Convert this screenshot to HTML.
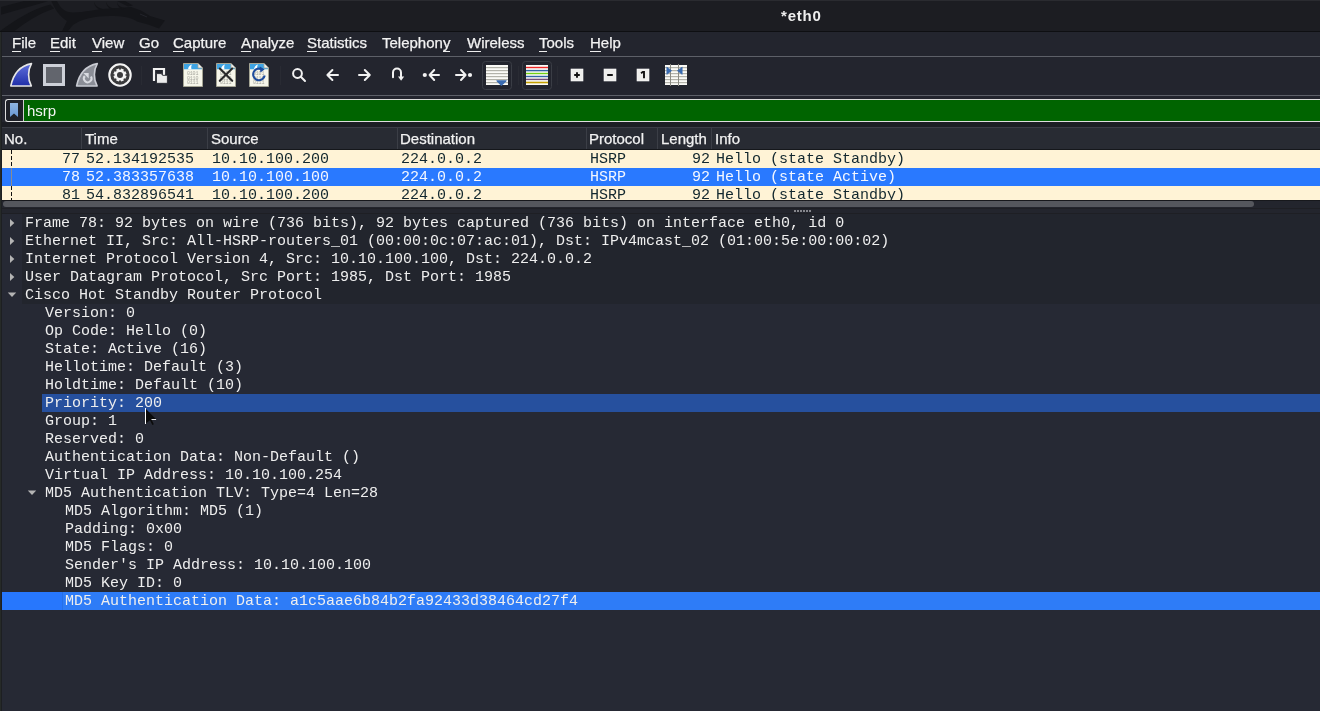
<!DOCTYPE html>
<html><head><meta charset="utf-8">
<style>
*{margin:0;padding:0;box-sizing:border-box}
html,body{will-change:transform;width:1320px;height:711px;overflow:hidden;background:#23252e;font-family:"Liberation Sans",sans-serif;position:relative}
.a{position:absolute}
#title{left:0;top:0;width:1320px;height:31px;background:#1c1d22}
#titlebot{left:0;top:31px;width:1320px;height:1px;background:#0e0f12}
#ttext{left:781px;top:0;height:31px;line-height:31px;font-weight:bold;font-size:15px;letter-spacing:0.8px;color:#eeeeee}
#menu{left:0;top:32px;width:1320px;height:24px;background:#23252e}
.mi{position:absolute;top:31px;height:24px;line-height:24px;font-size:15px;color:#f2f2f2;-webkit-text-stroke:0.25px #f2f2f2}
.mi u{text-decoration:none;border-bottom:1px solid #eeeeee}
.sep{position:absolute;left:2px;width:1318px;height:1px;background:#5d6068}
#tool{left:0;top:57px;width:1320px;height:38px;background:#23252e}
#filterwrap{left:5px;top:99px;width:1320px;height:23px;border:1px solid #dedede;border-right:none;border-radius:3px 0 0 3px;background:#1f2128}
#fgreen{left:24px;top:100px;width:1296px;height:21px;background:#006400}
#ftext{left:27px;top:100px;height:21px;line-height:21px;font-size:15px;color:#f4f4f4}
#hdrgap{left:2px;top:122px;width:1318px;height:5px;background:#1c1e24}
#hdr{left:2px;top:127px;width:1318px;height:22px;background:#282b33;border-top:1px solid #3b3e46}
.hc{position:absolute;top:128px;height:22px;line-height:22px;font-size:15px;color:#f2f2f2;-webkit-text-stroke:0.25px #f2f2f2}
.hs{position:absolute;top:128px;width:1px;height:21px;background:#3b3e46}
#hdrbot{left:2px;top:149px;width:1318px;height:1px;background:#15171b}
.row{position:absolute;left:2px;width:1318px;height:18px}
.cream{background:#fff3d6;color:#12272e}
.sel{background:#2979ff;color:#f4f7ff}
.pt{position:absolute;top:1px;height:18px;line-height:18px;font-family:"Liberation Mono",monospace;font-size:15px;white-space:pre}
#plclip{left:0;top:150px;width:1320px;height:50px;overflow:hidden}
#sbline{left:2px;top:200px;width:1318px;height:1px;background:#17181c}
#sbtrack{left:2px;top:201px;width:1318px;height:7px;background:#23252d}
#sbthumb{left:3px;top:201px;width:1251px;height:6px;border-radius:3px;background:#55575d}
#split{left:2px;top:208px;width:1318px;height:6px;background:#23252d;border-top:1px solid #1e1f24;border-bottom:1px solid #1e1f24}
#details{left:2px;top:214px;width:1318px;height:497px;background:#262934}
.dt{position:absolute;height:18px;line-height:18px;font-family:"Liberation Mono",monospace;font-size:15px;white-space:pre;color:#eeeeee}
#lb{left:0;top:32px;width:2px;height:679px;background:#1d1f22;border-left:1px solid #262a28}
</style></head><body>
<div id="title" class="a"></div>
<div id="titlebot" class="a"></div>
<div id="ttext" class="a">*eth0</div>
<div id="menu" class="a"></div>
<div class="mi" style="left:12px"><u>F</u>ile</div>
<div class="mi" style="left:50px"><u>E</u>dit</div>
<div class="mi" style="left:92px"><u>V</u>iew</div>
<div class="mi" style="left:139px"><u>G</u>o</div>
<div class="mi" style="left:173px"><u>C</u>apture</div>
<div class="mi" style="left:241px"><u>A</u>nalyze</div>
<div class="mi" style="left:307px"><u>S</u>tatistics</div>
<div class="mi" style="left:382px">Telephon<u>y</u></div>
<div class="mi" style="left:467px"><u>W</u>ireless</div>
<div class="mi" style="left:539px"><u>T</u>ools</div>
<div class="mi" style="left:590px"><u>H</u>elp</div>
<div class="sep" style="top:56px"></div>
<div id="tool" class="a"></div>
<div class="sep" style="top:95px"></div>
<svg class="a" style="left:0;top:0" width="700" height="96" viewBox="0 0 700 96">
<defs>
<linearGradient id="gfin" x1="0" y1="0" x2="0" y2="1"><stop offset="0" stop-color="#6070dc"/><stop offset="1" stop-color="#1f2ea8"/></linearGradient>
</defs>
<!-- shark fin -->
<path d="M10.8,86 C13,75 19,66 31.5,63.6 C27.8,70 27.5,79 31.3,86 Z" fill="url(#gfin)" stroke="#e6e6e6" stroke-width="1.6" stroke-linejoin="round"/>
<!-- stop -->
<rect x="44.5" y="65.5" width="19" height="19" fill="#62656d" stroke="#cdd0d8" stroke-width="3"/>
<!-- restart fin -->
<path d="M76.6,86 C78.8,75 84.8,66 97.3,63.6 C93.6,70 93.3,79 97.1,86 Z" fill="#8b8e97" stroke="#c9cbd3" stroke-width="1.6" stroke-linejoin="round"/>
<path d="M91,76.6 A3.8,3.8 0 1 1 84.8,76" fill="none" stroke="#d8dae0" stroke-width="2"/>
<path d="M83.3,73 L88.7,73 L88.7,78.6 Z" fill="#d8dae0"/>
<!-- gear -->
<circle cx="120" cy="75" r="10.7" fill="#3b3b3d" stroke="#f4f4f4" stroke-width="2.1"/>
<g fill="#f4f4f4" transform="translate(120 75) rotate(22.5)">
<circle r="5.3"/>
<rect x="-1.5" y="-6.5" width="3" height="13"/>
<rect x="-1.5" y="-6.5" width="3" height="13" transform="rotate(45)"/>
<rect x="-1.5" y="-6.5" width="3" height="13" transform="rotate(90)"/>
<rect x="-1.5" y="-6.5" width="3" height="13" transform="rotate(135)"/>
</g>
<circle cx="120" cy="75" r="3" fill="#3b3b3d"/>
<!-- separator -->
<rect x="141" y="66" width="1" height="19" fill="#292b33"/>
<!-- open -->
<path d="M154,81 V69 H164 V75" fill="none" stroke="#f2f2f2" stroke-width="2.2"/>
<path d="M156.5,83.3 V73.6 H161.3 L162.6,75.3 H167.4 V83.3 Z" fill="#ececec" stroke="#1d1f26" stroke-width="0.8"/>
<!-- file icons -->
<g id="fileic">
<path d="M183.5,63.5 H198 L202.5,68 V86.5 H183.5 Z" fill="#f6f6ea" stroke="#a5a594" stroke-width="1"/>
<path d="M184,64 H197.8 L202,68.4 V69.3 H184 Z" fill="#3ea4e4"/>
<path d="M198,63.5 V68 H202.5" fill="#f0f0f0" stroke="#a5a594" stroke-width="0.8"/>
<path d="M188,69.3 C188.6,66.5 190,65 192,64.6 C191,66.2 191,68 191.6,69.3 Z" fill="#ffffff"/>
<g fill="#a6a69e" font-family="Liberation Mono" font-size="5" letter-spacing="-0.2">
<text x="187" y="75.2">0101</text><text x="187" y="79.8">0110</text><text x="187" y="84.4">0111</text>
</g>
</g>
<use href="#fileic" x="33"/>
<use href="#fileic" x="66"/>
<path d="M219.8,68.6 L232.2,80.8 M232.2,68.6 L219.8,80.8" stroke="#2b2b2b" stroke-width="2.1" stroke-linecap="round"/>
<path d="M262.2,69.6 A5.8,5.8 0 1 0 264.7,75.5" fill="none" stroke="#1e4c9c" stroke-width="2.1"/>
<path d="M259.8,66.6 L264.6,69.4 L260.4,72.4 Z" fill="#1e4c9c"/>
<!-- separator -->
<rect x="280" y="66" width="1" height="19" fill="#292b33"/>
<!-- search -->
<circle cx="297.5" cy="73.5" r="4.4" fill="none" stroke="#f2f2f2" stroke-width="2"/>
<path d="M300.8,76.8 L305,81" stroke="#f2f2f2" stroke-width="2" stroke-linecap="round"/>
<g fill="none" stroke="#f2f2f2" stroke-width="2" stroke-linecap="round" stroke-linejoin="round">
<!-- back -->
<path d="M338,75 H327.4 M332.4,70 L327.4,75 L332.4,80"/>
<!-- forward -->
<path d="M359,75 H369.8 M364.8,70 L369.8,75 L364.8,80"/>
<!-- jump -->
<path d="M393,77.3 V72.5 A4,4 0 0 1 401,72.5 V77"/>
<!-- first -->
<path d="M439,75 H429.6 M434.2,70 L429.6,75 L434.2,80"/>
<!-- last -->
<path d="M456,75 H465.6 M461,70 L465.6,75 L461,80"/>
</g>
<path d="M398,76.4 H404.2 L401.1,80.8 Z" fill="#f2f2f2"/>
<circle cx="424.8" cy="75" r="2.1" fill="#f2f2f2"/>
<circle cx="470" cy="75" r="2.1" fill="#f2f2f2"/>
<!-- autoscroll button -->
<rect x="482.5" y="61.5" width="29" height="28" rx="3" fill="#23252e" stroke="#3a3d45" stroke-width="1"/>
<rect x="486" y="65" width="22" height="20" fill="#fbfbf7"/>
<g fill="#b3b3aa"><rect x="486" y="67" width="22" height="1.2"/><rect x="486" y="70" width="22" height="1.2"/><rect x="486" y="73" width="22" height="1.2"/><rect x="486" y="76" width="22" height="1.2"/><rect x="486" y="79" width="22" height="1.2"/><rect x="486" y="82" width="22" height="1.2"/></g>
<path d="M496.6,80.2 H506.4 Q507,80.6 506.2,81.4 L502,85.6 Q501.4,86.2 500.8,85.6 L496.8,81.4 Q496,80.6 496.6,80.2 Z" fill="#3a6bb0"/>
<rect x="518" y="66" width="1" height="19" fill="#292b33"/>
<!-- colorize button -->
<rect x="522.5" y="61.5" width="29" height="28" rx="3" fill="#23252e" stroke="#3a3d45" stroke-width="1"/>
<rect x="526" y="65" width="22" height="20" fill="#fbfbf7"/>
<rect x="526" y="66.8" width="22" height="1.4" fill="#ef2929"/>
<rect x="526" y="69.9" width="22" height="1.4" fill="#3465a4"/>
<rect x="526" y="72.8" width="22" height="1.4" fill="#73d216"/>
<rect x="526" y="75.8" width="22" height="1.4" fill="#3465a4"/>
<rect x="526" y="78.7" width="22" height="1.4" fill="#75507b"/>
<rect x="526" y="81.7" width="22" height="1.6" fill="#c4a000"/>
<rect x="557" y="66" width="1" height="19" fill="#292b33"/>
<!-- zoom in/out/normal -->
<rect x="571" y="69" width="12" height="12" fill="#eeeeec" stroke="#fafafa" stroke-width="0.6"/>
<path d="M574.2,75 H579.8 M577,72.2 V77.8" stroke="#111" stroke-width="1.9"/>
<rect x="604" y="69" width="12" height="12" fill="#eeeeec" stroke="#fafafa" stroke-width="0.6"/>
<path d="M607.2,75 H612.8" stroke="#111" stroke-width="2"/>
<rect x="637" y="69" width="12" height="12" fill="#eeeeec" stroke="#fafafa" stroke-width="0.6"/>
<path d="M641,73.2 L642.8,72 H644 V78.2" fill="none" stroke="#111" stroke-width="1.9"/>
<!-- resize columns -->
<rect x="665" y="65" width="22" height="20" fill="#fbfbf7"/>
<g fill="#b3b3aa"><rect x="665" y="67" width="22" height="1.2"/><rect x="665" y="70" width="22" height="1.2"/><rect x="665" y="73" width="22" height="1.2"/><rect x="665" y="76" width="22" height="1.2"/><rect x="665" y="79" width="22" height="1.2"/><rect x="665" y="82" width="22" height="1.2"/></g>

<rect x="670" y="64" width="1" height="22" fill="#8c8c84"/>
<rect x="678" y="64" width="1" height="22" fill="#8c8c84"/>
<path d="M666.8,67 L671.6,70.7 L666.8,74.4 Z" fill="#3a6bb0" stroke="#3a6bb0" stroke-width="0.6" stroke-linejoin="round"/>
<path d="M682.2,67 L677.4,70.7 L682.2,74.4 Z" fill="#3a6bb0" stroke="#3a6bb0" stroke-width="0.6" stroke-linejoin="round"/>
</svg>


<div id="filterwrap" class="a"></div>
<div id="fgreen" class="a"></div>
<div id="ftext" class="a">hsrp</div>
<div class="a" style="left:23px;top:100px;width:1px;height:21px;background:#cfcfcf"></div>

<div id="hdrgap" class="a"></div>
<div id="hdr" class="a"></div>
<div class="hc" style="left:4px">No.</div>
<div class="hs" style="left:81px"></div>
<div class="hc" style="left:85px">Time</div>
<div class="hs" style="left:207px"></div>
<div class="hc" style="left:211px">Source</div>
<div class="hs" style="left:397px"></div>
<div class="hc" style="left:400px">Destination</div>
<div class="hs" style="left:586px"></div>
<div class="hc" style="left:589px">Protocol</div>
<div class="hs" style="left:657px"></div>
<div class="hc" style="left:661px">Length</div>
<div class="hs" style="left:711px"></div>
<div class="hc" style="left:715px">Info</div>
<div id="hdrbot" class="a"></div>

<div id="plclip" class="a">
 <div class="row cream" style="top:0">
  <div class="pt" style="left:60px">77</div><div class="pt" style="left:84px">52.134192535</div><div class="pt" style="left:210px">10.10.100.200</div><div class="pt" style="left:399px">224.0.0.2</div><div class="pt" style="left:588px">HSRP</div><div class="pt" style="left:690px">92</div><div class="pt" style="left:714px">Hello (state Standby)</div>
 </div>
 <div class="row sel" style="top:18px">
  <div class="pt" style="left:60px">78</div><div class="pt" style="left:84px">52.383357638</div><div class="pt" style="left:210px">10.10.100.100</div><div class="pt" style="left:399px">224.0.0.2</div><div class="pt" style="left:588px">HSRP</div><div class="pt" style="left:690px">92</div><div class="pt" style="left:714px">Hello (state Active)</div>
 </div>
 <div class="row cream" style="top:36px">
  <div class="pt" style="left:60px">81</div><div class="pt" style="left:84px">54.832896541</div><div class="pt" style="left:210px">10.10.100.200</div><div class="pt" style="left:399px">224.0.0.2</div><div class="pt" style="left:588px">HSRP</div><div class="pt" style="left:690px">92</div><div class="pt" style="left:714px">Hello (state Standby)</div>
 </div>
</div>
<div id="sbline" class="a"></div>
<div id="sbtrack" class="a"></div>
<div id="sbthumb" class="a"></div>
<div id="split" class="a"></div>

<div id="details" class="a"></div>
<div class="a" style="left:22px;top:214px;width:1298px;height:90px;background:#22252d"></div>

<div class="dt" style="left:25px;top:215px">Frame 78: 92 bytes on wire (736 bits), 92 bytes captured (736 bits) on interface eth0, id 0</div>
<div class="dt" style="left:25px;top:233px">Ethernet II, Src: All-HSRP-routers_01 (00:00:0c:07:ac:01), Dst: IPv4mcast_02 (01:00:5e:00:00:02)</div>
<div class="dt" style="left:25px;top:251px">Internet Protocol Version 4, Src: 10.10.100.100, Dst: 224.0.0.2</div>
<div class="dt" style="left:25px;top:269px">User Datagram Protocol, Src Port: 1985, Dst Port: 1985</div>
<div class="dt" style="left:25px;top:287px">Cisco Hot Standby Router Protocol</div>
<div class="dt" style="left:45px;top:305px">Version: 0</div>
<div class="dt" style="left:45px;top:323px">Op Code: Hello (0)</div>
<div class="dt" style="left:45px;top:341px">State: Active (16)</div>
<div class="dt" style="left:45px;top:359px">Hellotime: Default (3)</div>
<div class="dt" style="left:45px;top:377px">Holdtime: Default (10)</div>
<div class="a" style="left:42px;top:394px;width:1278px;height:18px;background:#26509e"></div>
<div class="dt" style="left:45px;top:395px">Priority: 200</div>
<div class="dt" style="left:45px;top:413px">Group: 1</div>
<div class="dt" style="left:45px;top:431px">Reserved: 0</div>
<div class="dt" style="left:45px;top:449px">Authentication Data: Non-Default ()</div>
<div class="dt" style="left:45px;top:467px">Virtual IP Address: 10.10.100.254</div>
<div class="dt" style="left:45px;top:485px">MD5 Authentication TLV: Type=4 Len=28</div>
<div class="dt" style="left:65px;top:503px">MD5 Algorithm: MD5 (1)</div>
<div class="dt" style="left:65px;top:521px">Padding: 0x00</div>
<div class="dt" style="left:65px;top:539px">MD5 Flags: 0</div>
<div class="dt" style="left:65px;top:557px">Sender's IP Address: 10.10.100.100</div>
<div class="dt" style="left:65px;top:575px">MD5 Key ID: 0</div>
<div class="a" style="left:2px;top:592px;width:1318px;height:18px;background:#2777fd"></div>
<div class="a" style="left:62px;top:592px;width:1258px;height:18px;background:#2e7cf7;border-left:1px solid #2670e8"></div>
<div class="dt" style="left:65px;top:593px">MD5 Authentication Data: a1c5aae6b84b2fa92433d38464cd27f4</div>

<svg class="a" style="left:0;top:0" width="1320" height="711" viewBox="0 0 1320 711">
<g fill="#b4b4b4">
<path d="M10,219 L14.3,223 L10,227 Z"/>
<path d="M10,237 L14.3,241 L10,245 Z"/>
<path d="M10,255 L14.3,259 L10,263 Z"/>
<path d="M10,273 L14.3,277 L10,281 Z"/>
<path d="M7.8,292.4 H16.2 L12,297 Z"/>
<path d="M27.8,490.4 H36.2 L32,495 Z"/>
</g>
<g fill="#85868c">
<rect x="794" y="210" width="2" height="2"/><rect x="797" y="210" width="2" height="2"/><rect x="800" y="210" width="2" height="2"/><rect x="803" y="210" width="2" height="2"/><rect x="806" y="210" width="2" height="2"/><rect x="809" y="210" width="2" height="2"/>
</g>
<!-- bookmark -->
<defs><linearGradient id="gbm" x1="0" y1="0" x2="0" y2="1"><stop offset="0" stop-color="#8fb3e0"/><stop offset="1" stop-color="#6a99d4"/></linearGradient></defs>
<path d="M10,103 H18 V117 L14,113.6 L10,117 Z" fill="url(#gbm)"/>
<!-- related packets line -->
<path d="M11.5,150 V168" stroke="#111" stroke-width="1" stroke-dasharray="4 2"/>
<path d="M11.5,168 V186" stroke="#8a8c90" stroke-width="1"/>
<path d="M11.5,186 V200" stroke="#111" stroke-width="1" stroke-dasharray="4 2"/>
<!-- cursor -->
<rect x="145" y="408" width="1" height="16" fill="#ffffff"/>
<path d="M146,409 L155.8,419 L151.5,419.4 L153.8,424.3 L152.4,425 L150,420.3 L146,423.2 Z" fill="#0a0a0a"/>
<rect x="151.5" y="419" width="4.6" height="1" fill="#e8e8e8"/>
<!-- dragon -->
<g fill="#141519">
<path d="M1,7 L24,1 L48,1.3 L1,14.7 Z"/>
<path d="M0,31 C15,20 32,9 50.4,4.4 L54.2,8.5 C38,14 26,22 14.7,31 Z"/>
<path d="M51,0 L56.5,0 C60,8 65,12.5 73,12.5 C85,12.5 96,9 110,8.5 L131,7 L141,10.5 L150,16 L165,20.5 L159,28.5 L148,24.5 L137,21.5 C131,17.5 124,16 110,16 C95,16 81,19 73,25 L68,31 L62,31 L67,21 C59,16 54,8 51,0 Z"/>
<path d="M94,2 Q96,7.5 103,9 L99,9.5 Q94.5,7 94,2 Z"/>
<path d="M106,2 Q108,7.5 115,9 L111,9.5 Q106.5,7 106,2 Z"/>
<path d="M117,2.5 Q119,7.5 126,8.5 L122,9.2 Q117.5,7 117,2.5 Z"/>
<path d="M115,0 L125,1 L133,5.5 L128,6.5 Z"/>
</g>
<path d="M140,14 L147,17" stroke="#22232a" stroke-width="1"/>
<rect x="0" y="0" width="1320" height="1" fill="#2a2b30"/>
</svg>
<div id="lb" class="a"></div>
</body></html>
